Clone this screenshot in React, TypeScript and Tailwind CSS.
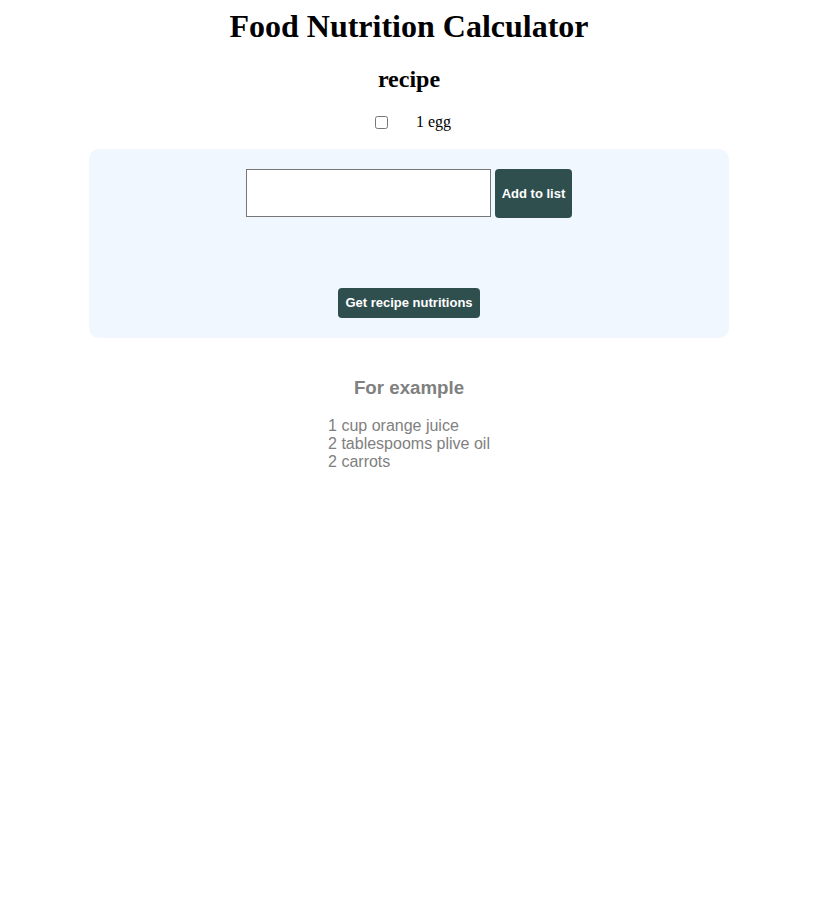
import React, { useState } from 'react'

export default function App() {
  const [item, setItem] = useState('')
  const [items, setItems] = useState(['1 egg'])

  const addItem = () => {
    if (item.trim()) {
      setItems([...items, item])
      setItem('')
    }
  }

  return (
    <div className="w-[818px] flex flex-col items-center font-['Liberation_Serif',serif] text-black">
      <h1 className="mt-[8px] text-[32px] font-bold leading-[37px]">Food Nutrition Calculator</h1>
      <h2 className="mt-[20px] text-[24px] font-bold leading-[28px]">recipe</h2>
      <div className="mt-[20px] flex flex-col items-center">
        {items.map((it, index) => (
          <div key={index} className="flex items-center h-[18px] ml-[8px]">
            <input type="checkbox" className="w-[13px] h-[13px] m-0" />
            <span className="ml-[28px] text-[16px]">{it}</span>
          </div>
        ))}
      </div>
      <div className="mt-[18px] w-[640px] h-[189px] bg-[#f0f7ff] rounded-[10px] flex flex-col items-center pt-[20px] font-['Liberation_Sans',sans-serif]">
        <div className="flex gap-[4px]">
          <input
            value={item}
            onChange={(e) => setItem(e.target.value)}
            className="w-[245px] h-[48px] border border-[#767676] bg-white px-2"
          />
          <button
            onClick={addItem}
            className="h-[49px] px-[7px] bg-[#2f4f4f] text-white text-[13px] font-bold rounded-[4px]"
          >
            Add to list
          </button>
        </div>
        <button className="mt-[70px] h-[30px] px-[7px] bg-[#2f4f4f] text-white text-[13px] font-bold rounded-[4px]">
          Get recipe nutritions
        </button>
      </div>
      <div className="mt-[39px] flex flex-col items-center font-['Liberation_Sans',sans-serif] text-[#808080]">
        <h3 className="text-[18.7px] font-bold leading-[22px]">For example</h3>
        <div className="mt-[18px] text-[16px] leading-[18px]">
          <div>1 cup orange juice</div>
          <div>2 tablespooms plive oil</div>
          <div>2 carrots</div>
        </div>
      </div>
    </div>
  )
}
